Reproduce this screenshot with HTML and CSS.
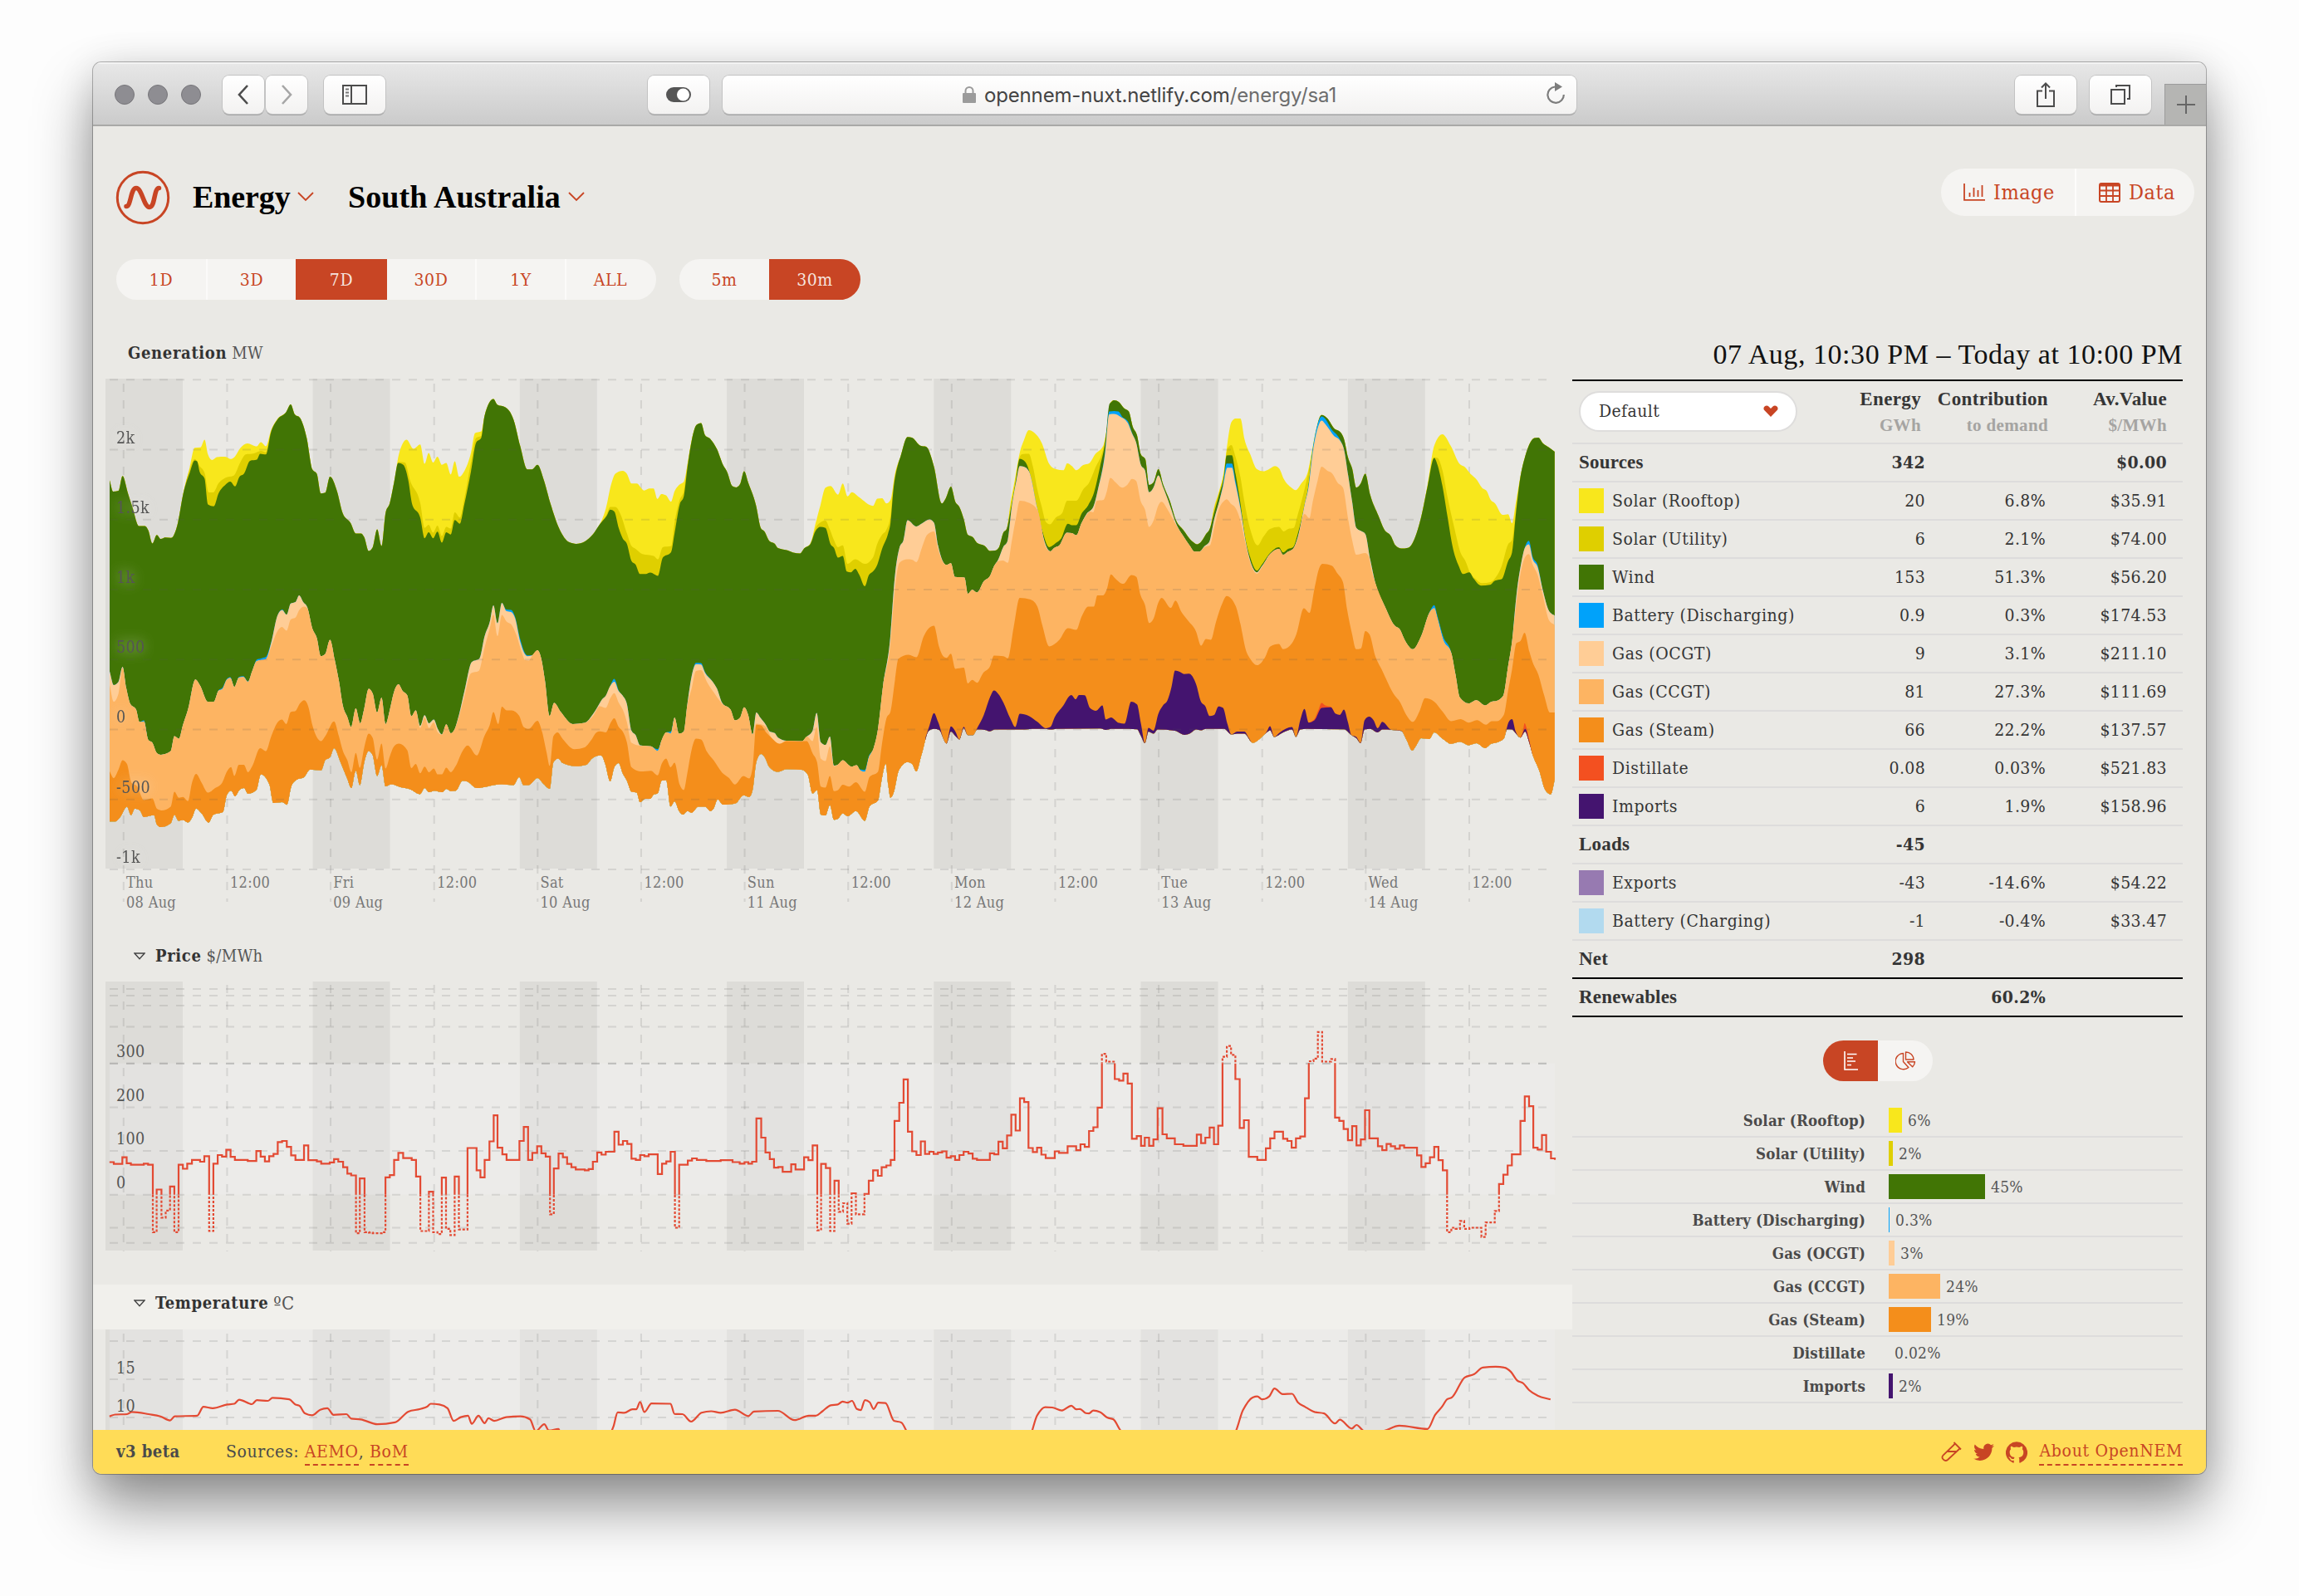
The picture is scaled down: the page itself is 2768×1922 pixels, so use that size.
FILE: index.html
```html
<!DOCTYPE html>
<html lang="en">
<head>
<meta charset="utf-8">
<title>OpenNEM: South Australia</title>
<link rel="stylesheet" href="styles.css">
</head>
<body>
<div class="window">
  <div class="toolbar">
    <div class="lights"><i></i><i></i><i></i></div>
    <div class="nav">
      <span class="tb nav-btn"><svg width="16" height="26" viewBox="0 0 16 26"><path d="M13 2 3 13l10 11" fill="none" stroke="#4c4c4c" stroke-width="2.6"/></svg></span>
      <span class="tb nav-btn"><svg width="16" height="26" viewBox="0 0 16 26"><path d="M3 2l10 11L3 24" fill="none" stroke="#a6a6a6" stroke-width="2.6"/></svg></span>
    </div>
    <span class="tb side-btn"><svg width="30" height="24" viewBox="0 0 30 24"><path d="M1 1h28v22H1zM11 1v22" fill="none" stroke="#4c4c4c" stroke-width="2"/><path d="M4 5.500h4M4 9.500h4M4 13.500h4" stroke="#777" stroke-width="2"/></svg></span>
    <span class="tb reader-btn"><svg width="30" height="18" viewBox="0 0 30 18"><rect width="30" height="18" rx="9" fill="#555"/><circle cx="20.500" cy="9" r="7.500" fill="#fff"/></svg></span>
    <div class="tb url">
      <svg class="lock" width="16" height="20" viewBox="0 0 16 20"><rect y="8" width="16" height="12" rx="1" fill="#9b9b9b"/><path d="M3.500 9V5.500a4.500 4.500 0 0 1 9 0V9" fill="none" stroke="#9b9b9b" stroke-width="2"/></svg>
      <span class="address">opennem-nuxt.netlify.com<span class="path">/energy/sa1</span></span>
      <svg class="reload" width="24" height="26" viewBox="0 0 24 26"><path d="M11 5.500a9.700 9.700 0 1 0 10.800 9.500" fill="none" stroke="#7d7d7d" stroke-width="2.200"/><path d="M11 0l9 5.500-9 5.500z" fill="#7d7d7d"/></svg>
    </div>
    <span class="tb share-btn"><svg width="24" height="32" viewBox="0 0 24 32"><path d="M8 11.500H2V30h20V11.500h-6M12 21V3M7 7.500l5-5 5 5" fill="none" stroke="#4c4c4c" stroke-width="2"/></svg></span>
    <span class="tb tabs-btn"><svg width="26" height="26" viewBox="0 0 26 26"><path d="M2 7h16v17H2zM8 4V2h16v16h-3" fill="none" stroke="#4c4c4c" stroke-width="2"/></svg></span>
    <span class="new-tab"><svg width="22" height="22" viewBox="0 0 22 22"><path d="M11 0v22M0 11h22" stroke="#666" stroke-width="2"/></svg></span>
  </div>

  <div class="page">
    <header class="header">
      <div class="brand">
        <svg class="logo" width="66" height="66" viewBox="0 0 66 66"><circle cx="33" cy="33" r="30.700" fill="none" stroke="#c84524" stroke-width="3"/><path d="M13 43.500C19 43.500 18 21.500 25 21.500S34 44.500 41 44.500 46 21.500 52.500 21.500" fill="none" stroke="#c84524" stroke-width="5.500" stroke-linecap="round"/></svg>
        <h1 class="crumb crumb-view">Energy</h1>
        <svg class="chev chev-view" width="20" height="12" viewBox="0 0 20 12"><path d="M1 1l9 9 9-9" fill="none" stroke="#c84524" stroke-width="1.800"/></svg>
        <h1 class="crumb crumb-region">South Australia</h1>
        <svg class="chev" width="20" height="12" viewBox="0 0 20 12"><path d="M1 1l9 9 9-9" fill="none" stroke="#c84524" stroke-width="1.800"/></svg>
      </div>
      <div class="export">
        <a class="export-btn image"><svg width="26" height="21" viewBox="0 0 26 21"><path d="M1 0v19.800h25M7.500 16v-5M12.500 16V5M17.500 16V8M22.500 16V2" fill="none" stroke="#c84524" stroke-width="1.800"/></svg>Image</a>
        <a class="export-btn data"><svg width="26" height="24" viewBox="0 0 26 24"><rect x="1" y="1" width="24" height="22" rx="2" fill="none" stroke="#c84524" stroke-width="2"/><path d="M1 3h24" stroke="#c84524" stroke-width="3"/><path d="M1 9.500h24M1 16h24M9 3v20M17 3v20" stroke="#c84524" stroke-width="1.800"/></svg>Data</a>
      </div>
    </header>
    <nav class="filters">
      <div class="seg range"><a>1D</a><a>3D</a><a class="on">7D</a><a>30D</a><a>1Y</a><a>ALL</a></div>
      <div class="seg interval"><a>5m</a><a class="on">30m</a></div>
    </nav>
    <div class="columns">
      <section class="charts">
        <h2 class="title title-gen"><b>Generation</b><span>MW</span></h2>
        <svg id="generation" class="chart" width="1781" height="650" viewBox="112 450 1781 650"></svg>
        <h2 class="title title-price"><svg width="14" height="9" viewBox="0 0 14 9"><path d="M1 1h12L7 7.800z" fill="none" stroke="#444" stroke-width="1.400"/></svg><b>Price</b><span>$/MWh</span></h2>
        <svg id="price" class="chart" width="1781" height="367" viewBox="112 1180 1781 367"></svg>
        <h2 class="title title-temp"><svg width="14" height="9" viewBox="0 0 14 9"><path d="M1 1h12L7 7.800z" fill="none" stroke="#444" stroke-width="1.400"/></svg><b>Temperature</b><span>ºC</span></h2>
        <svg id="temperature" class="chart" width="1781" height="121" viewBox="112 1601 1781 121"></svg>
      </section>
      <aside class="summary">
        <div class="period">07 Aug, 10:30 PM – Today at 10:00 PM</div>
        <div class="thead">
          <div class="select-cell"><div class="select">Default<svg width="18" height="16" viewBox="0 0 18 16"><path d="M9 15 .8 6.500C-1 2 4.500 0 6.500 2.500L9 5l2.500-2.500C13.500 0 19 2 17.200 6.500z" fill="#c84524"/></svg></div></div>
          <div class="th th-energy">Energy<small>GWh</small></div>
          <div class="th th-share">Contribution<small>to demand</small></div>
          <div class="th">Av.Value<small>$/MWh</small></div>
        </div>
        <div class="row total"><b>Sources</b><span>342</span><span></span><span>$0.00</span></div>
        <div class="row"><em><i class="c-rooftop"></i>Solar (Rooftop)</em><span>20</span><span>6.8%</span><span>$35.91</span></div>
        <div class="row"><em><i class="c-utility"></i>Solar (Utility)</em><span>6</span><span>2.1%</span><span>$74.00</span></div>
        <div class="row"><em><i class="c-wind"></i>Wind</em><span>153</span><span>51.3%</span><span>$56.20</span></div>
        <div class="row"><em><i class="c-battery"></i>Battery (Discharging)</em><span>0.9</span><span>0.3%</span><span>$174.53</span></div>
        <div class="row"><em><i class="c-ocgt"></i>Gas (OCGT)</em><span>9</span><span>3.1%</span><span>$211.10</span></div>
        <div class="row"><em><i class="c-ccgt"></i>Gas (CCGT)</em><span>81</span><span>27.3%</span><span>$111.69</span></div>
        <div class="row"><em><i class="c-steam"></i>Gas (Steam)</em><span>66</span><span>22.2%</span><span>$137.57</span></div>
        <div class="row"><em><i class="c-distillate"></i>Distillate</em><span>0.08</span><span>0.03%</span><span>$521.83</span></div>
        <div class="row"><em><i class="c-imports"></i>Imports</em><span>6</span><span>1.9%</span><span>$158.96</span></div>
        <div class="row total"><b>Loads</b><span>-45</span><span></span><span></span></div>
        <div class="row"><em><i class="c-exports"></i>Exports</em><span>-43</span><span>-14.6%</span><span>$54.22</span></div>
        <div class="row"><em><i class="c-charging"></i>Battery (Charging)</em><span>-1</span><span>-0.4%</span><span>$33.47</span></div>
        <div class="row total strong"><b>Net</b><span>298</span><span></span><span></span></div>
        <div class="row total strong"><b>Renewables</b><span></span><span>60.2%</span><span></span></div>
        <div class="toggle">
          <a class="on"><svg width="17" height="23" viewBox="0 0 17 23"><path d="M1 0v22h16M4 3.500h11.500M4 8h7M4 12h10M4 16.500h5" fill="none" stroke="#fff" stroke-width="1.600"/></svg></a>
          <a><svg width="25" height="23" viewBox="0 0 25 23"><path d="M9.500 2.500a9.600 9.600 0 1 0 6.400 17L9.500 12.500zM12.500 1v9h9.500a9.300 9.300 0 0 0-9.500-9zM14.500 12.800h9a9 9 0 0 1-2.800 6z" fill="none" stroke="#c84524" stroke-width="1.400" stroke-linejoin="round"/></svg></a>
        </div>
        <div class="bars">
          <div class="bar"><b>Solar (Rooftop)</b><i class="c-rooftop" style="width:16px"></i><span>6%</span></div>
          <div class="bar"><b>Solar (Utility)</b><i class="c-utility" style="width:5px"></i><span>2%</span></div>
          <div class="bar"><b>Wind</b><i class="c-wind" style="width:116px"></i><span>45%</span></div>
          <div class="bar"><b>Battery (Discharging)</b><i class="c-battery" style="width:1px"></i><span>0.3%</span></div>
          <div class="bar"><b>Gas (OCGT)</b><i class="c-ocgt" style="width:7px"></i><span>3%</span></div>
          <div class="bar"><b>Gas (CCGT)</b><i class="c-ccgt" style="width:62px"></i><span>24%</span></div>
          <div class="bar"><b>Gas (Steam)</b><i class="c-steam" style="width:51px"></i><span>19%</span></div>
          <div class="bar"><b>Distillate</b><i class="c-distillate" style="width:0"></i><span>0.02%</span></div>
          <div class="bar"><b>Imports</b><i class="c-imports" style="width:5px"></i><span>2%</span></div>
        </div>
      </aside>
    </div>
  </div>

  <footer class="footer">
    <b class="version">v3 beta</b>
    <span class="sources">Sources: <a>AEMO</a>, <a>BoM</a></span>
    <span class="links">
      <svg width="25" height="25" viewBox="0 0 25 25"><path d="M15.500 1 24 9.500M16.500 3 2.500 16.500c-3 3.500 2 8.500 5.500 5.500L22.500 8.500M8 12h10" fill="none" stroke="#c84524" stroke-width="1.800"/></svg>
      <svg width="25" height="22" viewBox="0 0 24 20"><path d="M24 2.400c-.9.400-1.800.7-2.800.8 1-.6 1.800-1.600 2.200-2.700-1 .6-2 1-3.100 1.200A4.900 4.900 0 0 0 11.900 6.200C7.800 6 4.200 4 1.700.9a4.900 4.900 0 0 0 1.500 6.600c-.8 0-1.600-.2-2.200-.6 0 2.300 1.600 4.400 3.900 4.900-.7.200-1.500.2-2.200.1.600 2 2.400 3.400 4.600 3.400A9.900 9.900 0 0 1 0 17.300 14 14 0 0 0 7.500 19.500c9.100 0 14.300-7.700 14-14.600 1-.7 1.800-1.600 2.500-2.500z" fill="#c84524"/></svg>
      <svg width="26" height="26" viewBox="0 0 24 24"><path d="M12 .3a12 12 0 0 0-3.800 23.400c.6.100.8-.3.800-.6v-2c-3.300.7-4-1.600-4-1.600-.6-1.400-1.400-1.800-1.400-1.800-1-.7.100-.7.100-.7 1.200 0 1.900 1.200 1.900 1.200 1 1.800 2.800 1.300 3.500 1 0-.8.400-1.300.7-1.600-2.700-.3-5.500-1.300-5.500-6 0-1.200.5-2.300 1.300-3.100-.2-.4-.6-1.600 0-3.200 0 0 1-.3 3.400 1.200a11.500 11.500 0 0 1 6 0c2.300-1.500 3.300-1.200 3.300-1.200.6 1.600.2 2.800 0 3.200.9.800 1.300 1.900 1.300 3.200 0 4.600-2.800 5.600-5.500 5.900.5.400.9 1 .9 2.200v3.300c0 .3.100.7.800.6A12 12 0 0 0 12 .3" fill="#c84524"/></svg>
      <a>About OpenNEM</a>
    </span>
  </footer>
</div>
<script src="charts.js"></script>
</body>
</html>
```
FILE: styles.css
```css
* { box-sizing: border-box; }
body {
  margin: 0;
  min-height: 1922px;
  padding: 75px 112px;
  background: #fdfdfd;
  color: #353535;
  font-family: "DejaVu Serif Condensed", "DejaVu Serif", serif;
  font-size: 21px;
}
svg { display: block; flex: none; }
i, em { font-style: normal; }
.window {
  width: 2544px;
  height: 1700px;
  display: flex;
  flex-direction: column;
  border-radius: 10px;
  overflow: hidden;
  background: #eae9e5;
  box-shadow: 0 0 0 1px rgba(0, 0, 0, .28), 0 40px 70px rgba(0, 0, 0, .42), 0 5px 45px rgba(0, 0, 0, .12);
}

/* browser toolbar */
.toolbar {
  flex: none;
  height: 77px;
  display: flex;
  align-items: center;
  padding: 1px 0 0 26px;
  background: linear-gradient(#e7e7e7, #cbcbcb);
  border-top: 2px solid #f3f3f3;
  border-bottom: 2px solid #a9a9a7;
}
.lights { display: flex; gap: 16px; }
.lights i { width: 24px; height: 24px; border-radius: 50%; background: #8e8d92; border: 1px solid #77767a; }
.tb {
  flex: none;
  height: 46px;
  display: flex;
  align-items: center;
  justify-content: center;
  border-radius: 8px;
  background: linear-gradient(#fff, #f3f2f1);
  box-shadow: 0 0 0 1px #c3c3c3, 0 2px 0 #a5a5a5;
}
.nav { display: flex; gap: 2px; margin-left: 26px; }
.nav-btn { width: 50px; }
.side-btn { width: 74px; margin-left: 20px; }
.reader-btn { width: 74px; margin-left: 316px; }
.url { position: relative; width: 1028px; margin-left: 16px; gap: 10px; font: 24px/48px Inter, sans-serif; color: #444; }
.address { letter-spacing: -.14px; padding-top: 2px; }
.path { color: #6d6d6d; }
.reload { position: absolute; right: 13px; top: 8px; }
.share-btn { width: 74px; margin-left: 528px; }
.tabs-btn { width: 74px; margin-left: 16px; }
.new-tab { margin-left: 16px; align-self: flex-end; width: 50px; height: 49px; display: flex; align-items: center; justify-content: center; background: #b5b5b3; border-left: 1px solid #9c9c9c; border-top: 1px solid #9c9c9c; }

/* page header */
.page { flex: 1; min-height: 0; }
.header { height: 160px; display: flex; justify-content: space-between; align-items: flex-start; padding: 51px 14px 0 27px; }
.brand { display: flex; align-items: center; padding-top: 2px; }
.crumb { margin: 0; font: bold 38px/64px "Liberation Serif", serif; color: #000; padding-bottom: 2px; }
.crumb-view { margin-left: 27px; width: 117px; letter-spacing: -.1px; white-space: nowrap; }
.chev { margin: 0 0 2px 9px; }
.crumb-region { margin-left: 41px; width: 256px; letter-spacing: .1px; white-space: nowrap; }
.export { display: flex; width: 305px; height: 57px; border-radius: 29px; overflow: hidden; background: #f5f4f2; }
.export-btn { display: flex; align-items: center; gap: 10px; padding-left: 27px; color: #c84524; font-size: 25px; letter-spacing: .5px; }
.image { width: 163px; border-right: 2px solid #fdfcfb; }

.filters { display: flex; gap: 28px; padding-left: 28px; height: 49px; }
.seg { display: flex; border-radius: 25px; overflow: hidden; background: #f5f4f2; }
.seg a { flex: none; width: 108px; text-align: center; font-size: 21px; letter-spacing: .6px; line-height: 50px; color: #c84524; border-left: 2px solid #fbfaf9; }
.seg a:first-child { border-left: 0; }
.range { width: 650px; }
.interval { width: 218px; }
.seg .on { background: #c84524; color: #f6e4de; border-color: #c84524; width: 110px; margin-right: -2px; padding-right: 2px; }
.seg .on + a { border-color: #c84524; }
.interval .on { margin-right: 0; }

.columns { display: grid; grid-template-columns: 1781px 735px; }

/* charts */
.charts { height: 1361px; overflow: hidden; }
.title { margin: 0; display: flex; align-items: center; font-size: 20px; font-weight: normal; color: #555; }
.title b { color: #333; margin-right: 6px; letter-spacing: .65px; }
.title span { letter-spacing: .4px; }
.title-gen { height: 89px; padding: 39px 0 0 42px; }
.title-price { height: 80px; padding: 22px 0 0 49px; }
.title-temp { height: 54px; padding: 0 0 10px 49px; background: #f1f0ec; }
.title-price b, .title-temp b { margin-left: 12px; }
.title-temp span { font-size: 22px; }
.chart text { font-family: "DejaVu Serif Condensed", "DejaVu Serif", serif; font-size: 19.500px; letter-spacing: .4px; fill: #555; }
.chart .tick { font-size: 18px; fill: #777; letter-spacing: .3px; }
.chart .halo { filter: drop-shadow(0 0 8px rgba(234, 233, 229, .7)); }
.grid { stroke: #5a5a5a; stroke-opacity: .15; stroke-width: 2; stroke-dasharray: 10 10; fill: none; }
.grid-strong { stroke-opacity: .32; }
.night { fill: #000; fill-opacity: .055; }
.shade { fill: #f3f3f3; fill-opacity: .3; }
.line { fill: none; stroke: #e34a33; stroke-width: 2.200; }
.dotted { stroke-dasharray: 3 2; }

/* legend table */
.period { height: 98px; padding-top: 50px; line-height: 32px; text-align: right; font-family: "Liberation Serif", serif; font-size: 34px; letter-spacing: .55px; color: #111; border-bottom: 2px solid #000; white-space: nowrap; }
.thead, .row { display: grid; grid-template-columns: 280px 145px 145px 146px; border-bottom: 2px solid #dddcdc; }
.thead { height: 76px; }
.select-cell { padding: 12px 0 0 8px; }
.select { display: flex; align-items: center; justify-content: space-between; width: 263px; height: 49px; padding: 0 21px 2px 22px; border: 2px solid #dedddc; border-radius: 25px; background: #fff; font-size: 21px; letter-spacing: .4px; }
.th { text-align: right; font: bold 23px/30px "Liberation Serif", serif; letter-spacing: .35px; padding-top: 7px; white-space: nowrap; }
.th small { display: block; font-size: 21px; line-height: 32px; color: #a5a4a2; }
.th-energy { padding-right: 5px; }
.th-share { margin-right: -3px; }
.row { height: 46px; line-height: 44px; font-size: 21px; }
.row span { text-align: right; letter-spacing: .35px; }
.row b { padding-left: 8px; font-family: "Liberation Serif", serif; font-size: 23px; letter-spacing: .2px; }
.row em { display: flex; align-items: center; gap: 10px; padding-left: 8px; white-space: nowrap; letter-spacing: .55px; }
.row i { width: 30px; height: 30px; }
.total span { font-weight: bold; }
.strong { border-bottom-color: #000; }

.toggle { display: flex; width: 132px; height: 49px; margin: 28px 0 28px 302px; border-radius: 25px; overflow: hidden; background: #f5f4f2; }
.toggle a { width: 66px; display: flex; align-items: center; justify-content: center; }
.toggle .on { background: #c84524; }

.bar { display: flex; align-items: center; height: 40px; border-bottom: 2px solid #dddcdc; color: #555; font-size: 19px; letter-spacing: .3px; }
.bar b { width: 353px; margin-right: 28px; text-align: right; color: #4a4a4a; font-size: 18.500px; letter-spacing: .2px; }
.bar i { height: 30px; margin-right: 7px; }

.c-rooftop { background: #f8e71c; }
.c-utility { background: #dfcf00; }
.c-wind { background: #417505; }
.c-battery { background: #00a2fa; }
.c-ocgt { background: #ffcd96; }
.c-ccgt { background: #fdb462; }
.c-steam { background: #f48e1b; }
.c-distillate { background: #f35020; }
.c-imports { background: #44146f; }
.c-exports { background: #977ab1; }
.c-charging { background: #b2daef; }

/* footer */
.footer { flex: none; height: 53px; display: flex; align-items: center; padding: 0 28px; background: #ffdc57; color: #4a4a4a; }
.version { width: 132px; font-size: 20px; letter-spacing: .5px; padding-bottom: 2px; }
.sources { font-size: 21px; letter-spacing: .6px; white-space: nowrap; padding-bottom: 2px; }
.footer a { color: #c84524; border-bottom: 2px dashed #c84524; padding-bottom: 3px; letter-spacing: .7px; }
.links { margin-left: auto; display: flex; align-items: center; gap: 14px; white-space: nowrap; }
.links a { padding-bottom: 4px; margin-top: 3px; }
```
FILE: charts.js
```js
(function () {
  // Series are stored in tiles; every tile has its own origin and scale.
  var TILES = {
    A: [110, 400, 2.45, 2.24],
    B: [700, 440, 2.45, 2.3758],
    C: [1280, 440, 2.529, 2.3758],
    P: [110, 1120, 1.7422, 2.24],
    Q: [980, 1120, 1.7422, 2.24]
  };
  function pts(spec) {
    var tile = TILES.A, out = [];
    spec.trim().split(/\s+/).forEach(function (tok) {
      if (TILES[tok]) { tile = TILES[tok]; return; }
      var p = tok.split(',');
      out.push([tile[0] + p[0] / tile[2], tile[1] + p[1] / tile[3]]);
    });
    return out.filter(function (p, i) { return !i || p[0] > out[i - 1][0] + 0.2; });
  }
  // Replaces the part of a series covered by each window.
  function patch(base, windows) {
    windows.forEach(function (w) {
      var p = pts(w), a = p[0][0], b = p[p.length - 1][0];
      base = base.filter(function (q) { return q[0] < a - 0.5; })
        .concat(p, base.filter(function (q) { return q[0] > b + 0.5; }));
    });
    return base;
  }
  // Monotone cubic interpolation.
  function curve(p) {
    var n = p.length, s = [], m = [], i;
    for (i = 0; i < n - 1; i++) s[i] = (p[i + 1][1] - p[i][1]) / (p[i + 1][0] - p[i][0]);
    m[0] = s[0]; m[n - 1] = s[n - 2];
    for (i = 1; i < n - 1; i++) {
      if (s[i - 1] * s[i] <= 0) { m[i] = 0; continue; }
      var h0 = p[i][0] - p[i - 1][0], h1 = p[i + 1][0] - p[i][0];
      var q = (s[i - 1] * h1 + s[i] * h0) / (h0 + h1);
      m[i] = Math.sign(q) * Math.min(Math.abs(s[i - 1]), Math.abs(s[i]), 0.5 * Math.abs(q)) * 2;
    }
    var d = '';
    for (i = 0; i < n - 1; i++) {
      var h = (p[i + 1][0] - p[i][0]) / 3;
      d += 'C' + [p[i][0] + h, p[i][1] + m[i] * h, p[i + 1][0] - h, p[i + 1][1] - m[i + 1] * h, p[i + 1][0], p[i + 1][1]].map(function (v) { return v.toFixed(1); }).join(' ');
    }
    return 'M' + p[0][0].toFixed(1) + ' ' + p[0][1].toFixed(1) + d;
  }
  function area(p, floor) {
    return curve(p) + 'V' + floor + 'H' + p[0][0].toFixed(1) + 'Z';
  }

  var top = pts('A 54,400 64,430 80,428 92,388 108,435 122,475 140,523 158,523 168,535 180,570 193,547 205,558 218,554 235,555 255,515 270,440 290,365 305,312 322,311 334,290 344,330 356,345 370,337 395,336 410,342 422,337 440,312 460,300 488,308 500,297 515,308 530,265 548,235 575,215 588,195 600,222 615,231 635,285 652,370 665,382 677,435 690,433 704,390 725,430 742,490 765,515 780,543 795,543 805,553 818,590 830,580 843,532 856,577 868,487 880,462 893,405 907,330 930,290 950,315 970,303 983,355 995,326 1008,352 1021,336 1034,358 1047,353 1060,384 1072,348 1085,390 1100,375 1120,325 1132,272 1150,268 1160,225 1186,180 1198,196 1220,202 1245,235 1265,307 1286,370 1300,370 1316,358 1335,400 1355,465 1380,530 1410,567 1430,571 1455,565 1480,545 1500,518 B 60,443 72,410 88,340 100,310 122,302 134,310 148,338 163,338 185,358 200,352 213,352 224,382 236,368 250,372 264,390 275,360 288,342 302,333 312,290 325,215 340,170 353,165 365,200 380,210 400,240 418,285 430,305 445,345 457,349 468,340 480,303 492,335 515,400 530,467 540,475 555,503 570,510 580,523 610,530 625,536 645,538 658,523 675,512 690,455 705,400 720,350 735,345 757,370 771,338 785,375 798,363 820,378 860,402 873,381 887,380 900,395 912,385 925,310 940,265 962,205 975,207 1000,230 1017,233 1040,290 1063,395 1075,380 1090,347 1103,390 1115,405 1128,440 1140,485 1155,492 1167,508 1190,517 1205,531 1220,530 1232,520 1244,480 1255,467 1265,400 1280,320 1293,250 1305,215 1320,185 1335,192 1358,222 1380,282 1400,297 1422,300 1433,280 1447,288 1460,300 1480,285 1498,280 1515,255 1540,228 1550,180 1560,108 C 155,100 170,105 185,122 200,132 212,175 225,200 237,255 250,268 262,342 275,335 290,297 305,342 325,388 343,442 365,470 395,505 408,512 420,505 435,483 447,467 460,405 475,360 490,300 500,225 512,163 525,152 540,152 552,210 570,255 590,297 610,303 625,298 645,288 658,295 672,325 695,350 708,357 725,338 745,305 757,250 770,185 787,142 805,152 825,180 845,192 855,210 868,265 880,295 893,350 905,340 920,310 935,370 960,430 978,470 998,488 1012,515 1030,524 1050,522 1063,510 1090,435 1110,340 1130,230 1155,197 1180,230 1208,283 1222,290 1240,310 1260,328 1275,350 1290,360 1302,385 1315,395 1338,428 1355,426 1367,452 1378,395 1392,320 1407,260 1420,225 1435,208 1447,207 1460,222 1480,235 1497,247');
  var utility = patch(top, [
    'A 270,440 290,370 305,342 320,362 334,380 346,432 360,432 375,408 395,393 420,387 440,350 455,330 480,327 500,320 515,324 530,268 548,236',
    'A 893,405 907,350 925,352 940,400 970,460 983,528 995,520 1008,541 1021,522 1034,550 1047,525 1060,530 1072,486 1087,500 1100,450 1120,350 1135,285 1150,280 1160,225',
    'A 1500,518 B 75,425 85,405 100,405 115,425 134,480 148,517 160,525 180,540 213,545 226,555 240,520 265,517 275,450 290,385 302,360 312,290 325,216',
    'B 658,523 675,510 695,458 720,444 733,470 745,500 757,520 771,515 785,568 808,555 836,568 860,550 873,510 887,485 900,470 912,430 920,350 935,278',
    'B 1265,410 1280,330 1293,262 1300,254 1320,253 1332,290 1345,355 1358,405 1370,448 1382,455 1400,435 1418,423 1433,387 1460,387 1480,355 1498,335 1515,295 1540,235 1552,170 1560,108',
    'C 460,410 475,365 490,305 500,240 512,228 525,262 540,320 552,390 570,470 592,515 610,490 630,468 657,462 672,475 685,468 702,465 715,425 735,355 750,290 757,252 770,186 787,142',
    'C 1110,343 1130,263 1140,265 1155,300 1170,375 1190,460 1210,535 1225,560 1240,595 1255,610 1275,623 1302,620 1320,603 1335,575 1355,512 1367,500 1378,420 1392,321'
  ]);
  var wind = patch(top, [
    'A 270,440 290,380 305,346 312,348 320,378 334,395 344,465 361,470 375,435 395,412 410,403 424,416 437,390 450,382 468,347 488,344 498,328 515,330 530,270 548,237',
    'A 893,405 905,353 920,358 935,400 946,463 970,500 983,556 995,540 1008,556 1021,538 1034,568 1047,540 1060,546 1072,507 1087,517 1100,465 1120,375 1135,298 1150,285 1160,225',
    'A 1500,518 B 75,430 85,413 97,418 110,465 122,495 134,510 148,560 160,570 173,597 190,597 203,593 226,602 240,550 264,535 275,480 290,398 302,375 312,300 325,217',
    'B 658,523 675,512 690,475 705,462 720,465 735,512 745,522 757,550 771,545 783,590 795,592 808,582 820,600 836,632 848,600 860,590 873,570 887,525 905,480 912,450 920,360 935,280',
    'B 1265,420 1280,340 1293,267 1305,272 1320,300 1335,375 1360,475 1380,520 1400,508 1415,495 1435,453 1447,457 1460,457 1475,425 1495,400 1512,365 1530,290 1545,220 1558,110',
    'C 460,420 475,370 490,315 498,258 514,257 525,310 540,395 552,480 570,550 590,587 605,570 630,537 657,520 670,535 685,525 700,520 715,480 735,400 747,345 757,265 770,190 787,142',
    'C 1110,345 1130,265 1140,285 1155,345 1170,430 1185,515 1205,575 1218,597 1237,592 1250,610 1272,630 1300,628 1315,616 1335,612 1355,560 1367,535 1378,430 1392,322'
  ]);
  var ocgt = pts('A 54,915 66,952 80,943 92,903 103,960 115,1003 132,1018 142,1052 155,1050 168,1100 180,1108 193,1135 205,1140 234,1130 245,1090 258,1097 270,1060 285,1018 307,937 320,952 344,997 361,997 375,967 386,963 400,937 410,933 422,957 435,932 448,930 462,943 475,913 488,887 515,882 530,840 550,762 563,750 576,762 588,732 602,728 613,710 625,728 637,742 652,800 665,825 677,874 690,868 704,830 718,885 730,940 742,1008 755,1038 766,1065 780,1015 793,1055 805,1015 818,962 830,975 843,1026 856,986 868,1057 880,1020 893,970 906,950 918,968 932,980 944,1036 957,1020 970,1062 983,1033 996,1055 1010,1045 1022,1070 1034,1085 1047,1058 1060,1082 1072,1070 1085,1030 1100,970 1122,890 1145,880 1160,820 1175,782 1186,737 1198,785 1211,730 1224,752 1238,755 1250,772 1265,835 1286,874 1300,872 1316,858 1327,880 1338,940 1352,1035 1365,1000 1385,1025 1420,1057 1455,1054 1480,1030 1500,1000 B 60,957 72,945 85,917 97,905 110,932 122,945 134,968 148,1045 160,1058 173,1087 205,1090 225,1103 237,1072 250,1050 264,1053 275,1008 288,1054 302,1048 312,975 325,890 338,855 353,856 365,880 385,902 400,925 415,965 440,985 453,1016 468,1008 480,978 492,1000 505,1055 516,993 528,1008 545,1030 555,1047 570,1052 580,1065 605,1074 650,1075 665,1062 682,1045 694,994 706,1078 720,1086 733,1062 745,1145 757,1142 771,1130 797,1148 812,1144 822,1158 836,1163 848,1122 862,1095 875,1040 890,915 910,790 925,600 938,522 950,500 962,443 988,461 1005,452 1027,441 1040,450 1052,515 1065,558 1077,571 1090,566 1102,605 1130,607 1140,653 1153,642 1167,650 1187,618 1205,603 1217,575 1230,555 1244,520 1256,505 1270,400 1283,330 1293,288 1305,290 1320,303 1345,410 1370,515 1383,532 1395,522 1410,515 1432,479 1447,480 1460,486 1475,452 1490,425 1510,405 1525,350 1545,250 1557,140 C 155,139 175,147 197,165 210,195 222,220 237,285 249,300 262,363 275,350 290,315 305,350 325,400 343,450 365,487 385,515 400,533 415,533 430,518 445,505 460,440 475,390 487,345 500,293 514,293 525,340 540,410 555,500 570,560 590,592 605,575 630,540 657,525 670,542 685,533 700,525 715,490 735,400 747,350 760,250 775,180 787,158 800,170 825,202 843,215 855,240 868,315 880,390 893,465 905,473 920,482 935,555 950,620 980,690 1010,745 1025,755 1040,785 1065,812 1090,775 1117,705 1130,695 1140,725 1157,785 1182,823 1195,885 1208,950 1235,967 1258,958 1285,973 1303,963 1320,960 1340,945 1355,860 1367,790 1380,660 1395,565 1407,520 1418,512 1430,555 1445,578 1460,640 1480,703 1497,716');
  var battery = patch(ocgt, [
    'A 142,1052 155,1047 168,1100',
    'A 361,997 375,966 386,960 400,935 410,931 422,957 435,930 448,928 462,942',
    'A 475,913 488,883 500,880 515,876 530,838',
    'A 550,762 563,748 576,762',
    'A 1211,730 1224,748 1238,749 1250,768 1265,828 1286,872',
    'B 85,917 97,897 110,930',
    'B 205,1090 225,1098 237,1072',
    'B 250,1050 264,1048 275,1008',
    'B 325,890 338,851 353,852 365,878',
    'B 812,1144 822,1156 836,1158 848,1118 862,1095',
    'B 1545,245 1557,132 C 155,131 168,132 180,147 197,160 210,193',
    'C 475,390 487,340 498,281 514,281 525,330 540,405',
    'C 747,345 760,240 775,168 787,146 800,155 815,180 843,212',
    'C 1117,703 1130,686 1140,718 1157,775 1182,822',
    'C 1395,565 1407,518 1418,502 1430,548 1445,572'
  ]);
  var ccgt = patch(ocgt, [
    'A 54,952 66,997 80,975 92,905',
    'A 530,850 548,808 562,795 576,805 588,775 602,770 613,750 628,740 637,745 652,800',
    'A 970,1068 983,1040 996,1068 1010,1053 1022,1080 1034,1086',
    'A 1085,1035 1100,985 1120,920 1143,914 1160,850 1175,800 1186,762 1198,820 1211,763 1224,780 1240,790 1255,820 1270,865 1280,885 1290,886 1300,873',
    'A 1480,1035 B 54,975 72,980 85,953 97,938 110,965 122,985 134,1020 148,1080 173,1088',
    'B 325,925 338,874 353,872 370,905 390,935 415,968',
    'B 516,1025 530,1027 545,1035 560,1065 585,1083 605,1074',
    'B 650,1077 665,1062 682,1075 694,1035 706,1125 720,1132 733,1090 745,1147',
    'B 910,810 925,640 938,565 962,555 975,556 988,563 1005,520 1020,485 1040,475 1052,525 1065,560',
    'B 1230,560 1244,558 1258,565 1270,500 1283,430 1293,387 1320,393 1345,413 1370,520',
    'B 1490,428 1500,418 1510,420 1520,388 1540,385 1550,360 1560,322 C 160,335 180,350 195,342 210,325 222,330 237,390 249,412 262,462 275,445 290,400 300,390 318,412 343,455 365,487',
    'C 430,520 447,515 460,465 475,410 490,388 498,383 512,397 525,408 540,445 555,510 570,565 590,596 605,578',
    'C 715,495 735,425 750,437 760,390 775,330 787,290 805,302 820,310 835,335 852,350 868,440 880,500 893,542 920,537 930,545 940,590',
    'C 1380,680 1392,600 1407,548 1418,540 1430,570 1445,600 1460,655 1480,730 1497,743'
  ]);
  var steam = pts('A 54,1185 66,1203 80,1180 92,1155 105,1165 118,1215 135,1225 155,1262 180,1258 193,1285 207,1290 234,1280 245,1240 258,1256 270,1254 285,1265 297,1215 309,1192 325,1215 344,1242 365,1230 385,1217 400,1185 412,1173 422,1197 435,1167 450,1167 462,1187 475,1170 498,1122 515,1130 530,1092 550,1052 562,1045 575,1057 588,1025 602,1022 615,1002 628,993 640,1010 652,1060 678,1103 690,1090 716,1050 730,1090 742,1130 755,1155 767,1187 780,1135 792,1175 805,1120 818,1083 830,1095 843,1153 856,1110 868,1177 880,1145 893,1117 907,1110 932,1128 944,1176 957,1165 970,1190 983,1172 996,1187 1010,1177 1022,1193 1034,1193 1047,1175 1060,1187 1075,1170 1095,1130 1110,1115 1137,1142 1160,1088 1175,1060 1186,1025 1200,1057 1211,1010 1225,1020 1240,1020 1262,1035 1275,1065 1290,1070 1316,1048 1330,1080 1343,1135 1352,1170 1363,1090 1375,1080 1390,1097 1425,1125 1455,1120 1475,1100 1490,1080 1500,1077 B 72,1050 85,1025 97,1010 110,1035 122,1048 134,1078 148,1150 175,1162 205,1160 225,1173 237,1140 250,1125 263,1150 275,1137 290,1200 302,1215 312,1170 325,1100 338,1068 353,1070 370,1105 390,1130 415,1165 435,1180 453,1199 478,1175 495,1182 505,1150 516,1028 530,1030 545,1050 560,1065 585,1083 605,1075 650,1075 665,1075 682,1110 695,1135 706,1205 720,1208 733,1175 745,1218 757,1215 771,1200 790,1205 810,1193 836,1220 850,1178 875,1163 885,1095 900,1010 912,990 925,900 935,840 965,828 988,835 1010,775 1040,745 1055,805 1068,833 1077,837 1090,825 1103,868 1128,865 1140,910 1153,900 1167,908 1185,880 1205,862 1217,830 1245,832 1258,838 1275,750 1293,665 1325,670 1345,690 1360,745 1380,804 1410,785 1435,752 1460,757 1475,720 1495,690 1512,690 1522,658 1538,658 1550,640 1562,598 C 157,608 183,625 208,600 223,605 235,655 249,685 262,737 275,725 290,678 300,665 328,694 342,673 360,705 380,730 405,762 420,802 435,783 450,785 465,735 485,680 498,660 525,688 540,740 555,810 570,840 590,858 615,835 630,805 657,797 670,812 697,795 710,770 733,695 750,708 765,640 780,580 790,568 818,573 835,595 852,620 865,700 880,770 892,812 907,810 920,760 933,770 950,830 970,870 1010,945 1025,962 1045,1000 1065,1020 1085,990 1102,952 1130,962 1155,990 1182,1018 1210,1012 1235,1022 1260,1015 1288,1028 1305,1018 1320,1018 1342,1000 1355,930 1367,870 1380,795 1393,788 1405,765 1420,820 1430,850 1447,885 1465,945 1482,993 1497,993');
  var imports = pts('B 1015,1065 1027,1030 1040,995 1052,1020 1077,1082 1090,1033 1103,1047 1115,1070 1128,1034 1140,1058 1155,1058 1170,1033 1187,1000 1205,950 1217,930 1230,940 1245,965 1265,1010 1280,1035 1293,997 1320,1003 1345,1020 1370,1038 1383,1035 1397,1005 1420,975 1445,943 1458,955 1468,943 1485,944 1500,980 1518,988 1537,973 1547,1013 1562,1007 C 170,1023 187,1025 207,962 225,970 237,1025 249,1080 260,1037 275,1045 290,997 305,972 318,958 330,920 341,873 355,877 368,883 383,882 405,912 420,963 433,975 446,1003 460,1000 473,976 487,980 500,1025 513,1056 530,1048 552,1048 565,1065 577,1082 590,1077 620,1048 630,1032 643,1063 660,1050 697,1035 709,1063 722,1015 735,983 748,1022 765,1016 787,980 815,978 830,997 843,1000 855,985 867,1020 878,1058 893,1063 906,1080 918,1015 932,1005 945,1015 958,1038 972,1020 1000,1043 1030,1045 1040,1063 1063,1110 1200,1110 1340,1090 1350,1042 1357,1020 1367,1012 1378,1048 1392,1065 1407,1040 1418,1070 1430,1120');
  var distillate = [
    pts('C 748,1023 765,1012 778,985 787,966 798,973 815,977 825,990'),
    pts('C 1392,1066 1400,1048 1405,1024 1412,1040 1420,1075 1430,1118')
  ];
  var base = pts('A 54,1320 70,1320 85,1308 105,1280 117,1303 128,1286 143,1290 155,1308 185,1303 193,1328 205,1335 234,1325 245,1302 257,1318 270,1316 285,1323 297,1310 309,1285 325,1298 346,1323 360,1302 388,1295 400,1248 412,1237 424,1252 437,1235 450,1230 462,1245 487,1235 500,1193 525,1220 537,1270 563,1268 577,1275 590,1225 605,1208 628,1200 645,1180 678,1182 690,1155 704,1147 716,1122 735,1160 755,1205 767,1230 780,1183 792,1222 805,1160 818,1130 830,1142 843,1197 856,1168 868,1225 885,1220 910,1227 940,1233 970,1246 983,1230 996,1241 1012,1237 1035,1241 1047,1232 1060,1238 1075,1237 1095,1210 1108,1212 1137,1230 1170,1225 1210,1220 1245,1222 1262,1200 1275,1222 1290,1222 1316,1203 1335,1220 1352,1232 1363,1160 1377,1150 1390,1162 1430,1171 1460,1167 1477,1150 1500,1142 B 60,1117 70,1140 85,1190 97,1150 110,1138 122,1168 134,1188 148,1220 163,1222 173,1250 188,1240 203,1240 213,1228 225,1225 237,1188 250,1187 263,1262 275,1247 288,1275 300,1285 313,1275 325,1280 345,1263 365,1263 380,1275 390,1268 402,1242 418,1257 455,1253 478,1230 495,1235 505,1215 516,1135 530,1112 540,1120 555,1150 580,1163 605,1155 650,1157 668,1172 682,1225 695,1215 706,1285 720,1288 733,1258 745,1300 757,1297 771,1282 785,1290 810,1275 836,1303 850,1262 875,1245 885,1190 898,1140 905,1200 912,1237 922,1220 936,1160 962,1135 975,1140 988,1162 1003,1115 1025,1045 1040,1040 1055,1043 1077,1082 1090,1048 1103,1060 1115,1070 1128,1038 1140,1058 1155,1058 1168,1042 1190,1043 1205,1047 1220,1042 1300,1042 1330,1040 1370,1040 1385,1042 1400,1040 1530,1039 1547,1043 1562,1040 C 200,1040 225,1041 237,1060 249,1081 260,1048 275,1054 288,1042 340,1045 370,1057 385,1054 405,1042 420,1044 435,1040 490,1040 513,1056 530,1054 552,1054 577,1080 590,1075 620,1050 630,1044 643,1063 670,1050 697,1042 709,1063 722,1042 740,1040 855,1041 878,1058 893,1067 906,1081 918,1042 935,1040 958,1050 972,1042 1030,1046 1045,1070 1063,1102 1075,1088 1090,1067 1115,1069 1130,1050 1155,1068 1182,1083 1208,1077 1235,1087 1258,1081 1285,1095 1303,1083 1320,1079 1342,1068 1352,1041 1367,1042 1380,1055 1392,1065 1407,1048 1418,1075 1430,1115 1450,1160 1468,1215 1485,1227 1497,1185');

  function line(x1, y1, x2, y2, cls) {
    return '<path class="grid ' + (cls || '') + '" d="M' + x1 + ' ' + y1 + 'L' + x2 + ' ' + y2 + '"/>';
  }
  function nights(y, h) {
    var s = '';
    for (var i = 0; i < 7; i++) {
      var x = i ? 127.3 + 249.25 * i : 127;
      s += '<rect class="night" x="' + x + '" y="' + y + '" width="93" height="' + h + '"/>';
    }
    return s;
  }
  function verticals(y1, y2) {
    var s = '';
    for (var i = 0; i < 14; i++) s += line(148.8 + 124.63 * i, y1, 148.8 + 124.63 * i, y2);
    return s;
  }
  function label(x, y, t, cls) {
    return '<text class="' + (cls || '') + '" x="' + x + '" y="' + y + '">' + t + '</text>';
  }

  var g = nights(456, 590) + verticals(462, 1086);
  g += '<clipPath id="above"><path d="' + curve(base) + 'V450H132Z"/></clipPath><g clip-path="url(#above)">';
  [[top, '#f8e71c'], [utility, '#dfcf00'], [wind, '#417505'], [battery, '#00a2fa'], [ocgt, '#ffcd96'], [ccgt, '#fdb462'], [steam, '#f48e1b'],
    [distillate[0], '#f35020'], [distillate[1], '#f35020'], [imports, '#44146f']].forEach(function (s) {
    g += '<path fill="' + s[1] + '" d="' + area(s[0], 1040) + '"/>';
  });
  g += '</g>';
  for (var k = 0; k < 8; k++) g += line(132, 457.3 + 84.25 * k, 1872, 457.3 + 84.25 * k);
  ['2k', '1.5k', '1k', '500', '0', '-500', '-1k'].forEach(function (t, i) {
    g += label(140, 533.5 + 84.2 * i, t, 'halo');
  });
  ['Thu', 'Fri', 'Sat', 'Sun', 'Mon', 'Tue', 'Wed'].forEach(function (d, i) {
    var x = 152 + 249.26 * i;
    g += label(x, 1069, d, 'tick') + label(x, 1093, ('0' + (8 + i)).slice(-2) + ' Aug', 'tick') + label(x + 125, 1069, '12:00', 'tick');
  });
  document.getElementById('generation').innerHTML = g;

  var steps = pts('P 38,626 47,631 65,613 74,629 83,633 110,630 119,633 129,815 137,700 147,776 156,757 165,692 174,815 183,633 192,644 201,630 211,620 228,625 237,610 247,812 256,630 265,607 274,611 283,593 292,612 301,620 328,623 346,596 355,611 364,624 373,610 382,604 391,572 400,569 410,585 419,608 428,620 446,581 455,621 473,624 482,630 500,627 509,618 518,625 528,640 537,657 545,662 555,818 563,670 573,815 582,816 590,818 609,815 617,667 626,661 635,620 644,601 654,615 672,620 681,665 690,812 708,706 717,815 726,820 735,668 744,806 753,823 762,665 771,808 789,588 808,648 816,667 825,620 835,570 844,500 852,587 862,605 871,620 898,569 907,531 916,620 925,601 935,583 944,602 953,611 962,767 970,643 980,603 989,613 998,631 1007,640 1016,646 1035,648 1043,645 1052,625 1061,600 1070,606 1079,598 1097,544 1106,579 1115,569 1124,577 1133,617 1142,620 1151,607 1160,610 1169,605 1188,658 1197,630 1206,624 1215,598 1224,803 1233,633 1251,622 1260,616 1270,620 1290,623 1320,621 1345,626 1360,630 1370,626 1378,630 1386,625 1395,508 1405,560 1414,600 1423,618 1432,641 1441,639 1450,652 1468,632 1477,646 1495,613 1504,621 1513,581 Q 7,810 15,631 25,642 34,812 43,676 52,760 61,737 70,792 79,710 88,767 106,712 115,676 124,648 134,663 142,640 152,635 161,620 169,515 179,466 188,403 197,544 206,597 215,607 224,570 233,604 242,598 251,604 260,600 269,597 278,614 287,610 296,620 305,607 314,598 324,603 333,617 342,620 369,602 378,605 387,571 396,589 405,554 414,498 423,541 432,454 441,464 450,588 459,599 468,587 477,606 486,615 505,597 514,601 532,583 550,594 559,578 568,585 577,542 586,532 595,479 604,334 613,355 631,402 640,406 649,387 658,414 667,563 677,556 686,582 694,560 703,582 712,565 721,481 731,551 740,562 757,578 775,582 803,552 812,575 821,560 830,533 839,578 848,528 857,342 866,313 875,337 884,402 893,534 902,513 912,612 930,620 948,589 957,562 966,544 984,563 993,569 1002,587 1011,562 1020,557 1030,454 1038,354 1048,347 1057,275 1066,355 1085,348 1093,506 1102,515 1111,537 1120,567 1129,529 1138,581 1147,565 1156,486 1165,562 1183,583 1192,594 1201,577 1210,583 1219,590 1229,581 1238,587 1265,608 1274,639 1283,629 1292,613 1301,585 1310,621 1319,648 1328,815 1337,803 1346,806 1355,785 1364,806 1375,803 1400,828 1409,789 1428,758 1437,685 1446,660 1455,635 1464,605 1482,515 1491,449 1500,475 1509,587 1518,592 1527,553 1536,598 1546,616 1554,620');
  var sd = 'M' + steps[0].map(function (v) { return v.toFixed(1); }).join(' ');
  steps.slice(1).forEach(function (p) { sd += 'H' + p[0].toFixed(1) + 'V' + p[1].toFixed(1); });
  g = nights(1182, 324) + '<rect class="shade" x="132" y="1280.700" width="1740" height="158"/>' + verticals(1186, 1507);
  [1191, 1199, 1211, 1236.5, 1333.4, 1386, 1438.8, 1478.5, 1496.8].forEach(function (y) { g += line(132, y, 1872, y); });
  g += line(132, 1280.7, 1872, 1280.7, 'grid-strong');
  g += '<clipPath id="mid"><path d="M112 1280.700h1781v158H112z"/></clipPath><clipPath id="outer"><path d="M112 1180h1781v100.700H112zM112 1438.700h1781v80H112z"/></clipPath>';
  g += '<path class="line" clip-path="url(#mid)" d="' + sd + '"/><path class="line dotted" clip-path="url(#outer)" d="' + sd + '"/>';
  ['300', '200', '100', '0'].forEach(function (t, i) { g += label(140, 1273 + 52.7 * i, t); });
  document.getElementById('price').innerHTML = g;

  var temp = pts('P 38,1312 50,1307 75,1306 85,1300 120,1306 145,1312 165,1323 175,1312 222,1310 235,1286 255,1290 285,1280 300,1278 310,1267 337,1279 347,1268 370,1270 380,1262 415,1266 428,1280 437,1284 448,1304 463,1309 480,1294 495,1290 508,1308 535,1306 545,1318 565,1320 600,1333 637,1328 665,1299 690,1292 705,1285 712,1278 730,1280 747,1290 760,1324 775,1314 790,1310 798,1332 812,1310 825,1330 833,1317 845,1324 870,1314 900,1312 920,1320 932,1352 950,1333 960,1350 980,1346 985,1360 1080,1370 1095,1340 1104,1301 1118,1302 1135,1293 1143,1293 1151,1273 1160,1300 1175,1277 1215,1278 1223,1305 1240,1306 1258,1326 1280,1302 1300,1298 1320,1302 1350,1294 1378,1311 1390,1299 1440,1297 1475,1322 1505,1310 Q 4,1310 18,1298 35,1282 50,1280 60,1272 70,1275 80,1270 90,1292 98,1295 107,1268 117,1274 125,1292 135,1275 150,1276 168,1324 183,1328 200,1360 450,1370 468,1310 485,1287 500,1288 520,1296 540,1283 550,1293 558,1292 570,1303 577,1304 586,1296 600,1300 615,1315 628,1320 648,1355 880,1360 900,1295 920,1261 930,1258 940,1266 955,1258 966,1237 983,1252 1003,1251 1015,1274 1030,1286 1050,1300 1070,1304 1093,1331 1103,1321 1128,1345 1138,1335 1155,1352 1190,1352 1228,1337 1287,1346 1303,1308 1318,1285 1328,1266 1338,1261 1365,1207 1385,1198 1403,1180 1430,1178 1448,1180 1462,1192 1475,1215 1488,1223 1500,1241 1518,1256 1545,1266');
  g = nights(1600, 130) + '<rect class="shade" x="132" y="1600" width="1740" height="130"/>' + verticals(1606, 1730);
  [1615, 1661, 1707].forEach(function (y) { g += line(132, y, 1872, y); });
  g += '<path class="line" d="' + curve(temp) + '"/>' + label(140, 1654, '15') + label(140, 1700, '10');
  document.getElementById('temperature').innerHTML = g;
})();
```
